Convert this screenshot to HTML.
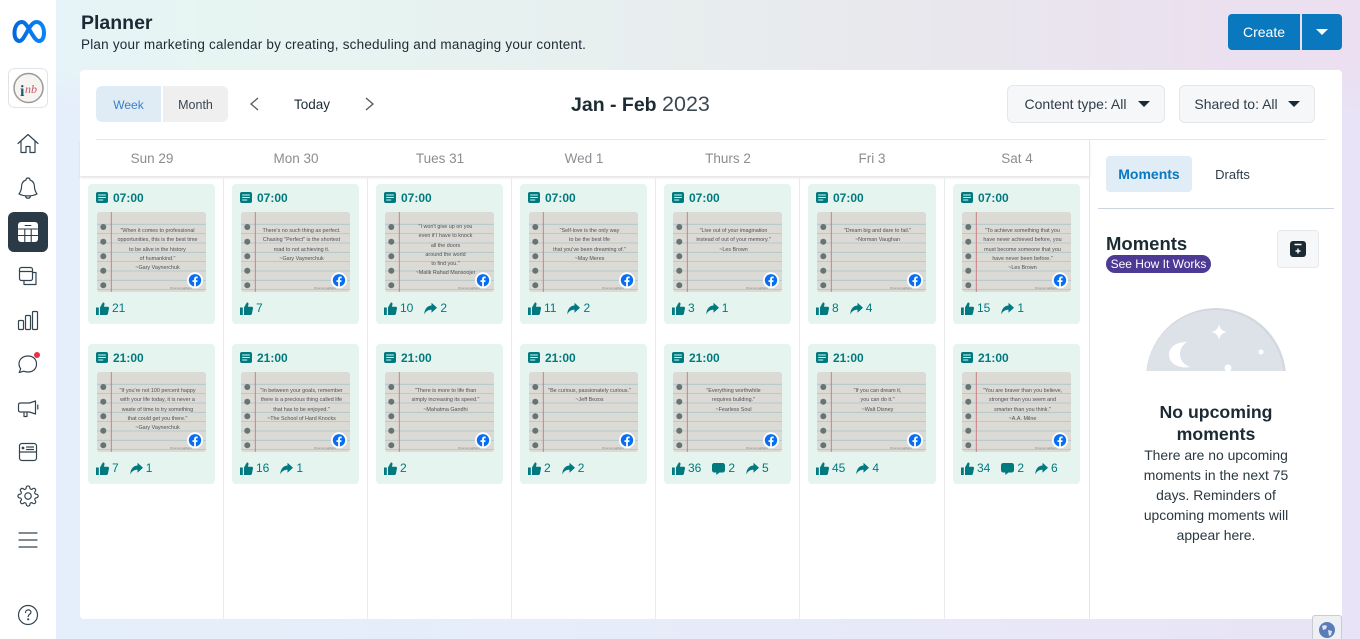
<!DOCTYPE html>
<html lang="en"><head><meta charset="utf-8"><title>Planner</title>
<style>
*{box-sizing:border-box}
html,body{margin:0;padding:0;width:1360px;height:639px;overflow:hidden}
body{position:relative;font-family:"Liberation Sans",sans-serif;color:#1c2b33;
background:linear-gradient(90deg,#e5eefb 0,#e7edfa 40%,#e8e3f6 100%)}
.a{position:absolute}
.band{left:56px;top:0;width:1304px;height:110px;background:linear-gradient(90deg,#e6f3f8 0,#e7f5f2 12%,#e7f2f0 32%,#e8e9ed 62%,#ebe0ef 90%,#ebdff1 100%);-webkit-mask-image:linear-gradient(#000 62%,transparent);mask-image:linear-gradient(#000 62%,transparent)}
.side{left:0;top:0;width:56px;height:639px;background:#fff}
.panel{left:80px;top:70px;width:1262px;height:549px;background:#fff;border-radius:4px}
.sep{top:177px;width:1px;height:442px;background:#e9ebee}
.hd{top:151px;height:16px;line-height:16px;font-size:13.5px;color:#8a8d91;text-align:center;width:120px}
.card{position:absolute;width:127px;height:140px;background:#e6f4ef;border-radius:4px}
.w8{width:128px}
.ti{position:absolute;left:8px;top:8px}
.t{position:absolute;left:25px;top:6px;font-size:12px;line-height:16px;font-weight:700;color:#00797f}
.img{position:absolute;left:9px;top:28px;width:109px;height:80px;border-radius:3px;overflow:hidden}
.img svg{position:absolute;left:0;top:0}
.q{position:absolute;left:14px;width:93px;top:15px;font-size:5.4px;line-height:9.3px;color:#505050;text-align:center;white-space:nowrap}
.st{position:absolute;left:8px;top:116px;height:16px;display:flex;align-items:center;font-size:12px;color:#00797f;white-space:nowrap}
.st svg{margin-right:3px;flex:none}
.st span{margin-right:11px}
.btn{border-radius:6px;background:#f6f7f9;border:1px solid #e4e6ea;font-size:14px;line-height:36px;color:#2f3d47}
.tri{position:absolute;width:0;height:0;border-left:6px solid transparent;border-right:6px solid transparent;border-top:6px solid #1c2b33}
.c{text-align:center;white-space:nowrap}
</style></head><body>
<svg width="0" height="0" style="position:absolute">
<defs>
<linearGradient id="mg" x1="0" x2="1" y1="0" y2="0"><stop offset="0" stop-color="#0668e1"/><stop offset="1" stop-color="#0a85f5"/></linearGradient>
<symbol id="post" viewBox="0 0 12 11"><rect width="12" height="11" rx="2" fill="#00797f"/><path d="M2.2 3h7.6M2.2 5.5h7.6M2.2 8h5" stroke="#e6f4ef" stroke-width="1.1"/></symbol>
<symbol id="th" viewBox="0 0 13 13"><path d="M0 5.5h2.8V13H0zM4 5.5 6.7.6c1.300-.4 2 .5 1.800 1.700L8 4.700h3.700c1 0 1.500.8 1.300 1.700l-1.100 5.400c-.2.800-.7 1.200-1.500 1.200H4z" fill="#00797f"/></symbol>
<symbol id="co" viewBox="0 0 13 13"><path d="M2.500 1h8C12 1 13 2 13 3.500v4.500C13 9.500 12 10.500 10.500 10.500H7.500L4.300 13v-2.500H2.500C1 10.500 0 9.500 0 8V3.500C0 2 1 1 2.500 1z" fill="#00797f"/></symbol>
<symbol id="sh" viewBox="0 0 13 13"><path d="M7.500.8 13 5.800 7.500 10.800V7.800C4.500 7.800 2 8.800.3 12.500.3 7.800 2.500 3.900 7.500 3.500z" fill="#00797f"/></symbol>
<symbol id="paper" viewBox="0 0 109 80">
<rect width="109" height="80" fill="#dbdad5"/>
<g stroke="#adc4ca" stroke-width=".8"><path d="M0 12.300h109M0 21.600h109M0 31h109M0 40.300h109M0 49.600h109M0 59h109M0 68.300h109M0 77.600h109"/></g>
<path d="M14.300 0v80" stroke="#c9767c" stroke-width=".9"/>
<g fill="#687473"><circle cx="6.300" cy="15" r="3"/><circle cx="6.300" cy="29.700" r="3"/><circle cx="6.300" cy="44.300" r="3"/><circle cx="6.300" cy="58.700" r="3"/><circle cx="6.300" cy="73.300" r="3"/></g>
<text x="73" y="77" font-size="3" fill="#8a8a8a" font-family="Liberation Sans">#ConversaMaps</text>
<circle cx="98" cy="68.300" r="8" fill="#fff"/><circle cx="98" cy="68.300" r="6.200" fill="#0a6ef0"/>
<path d="M97.100 74.500v-4.500h-1.600v-1.800h1.600v-1.300c0-1.600.9-2.400 2.300-2.400l1.300.1v1.600h-.9c-.7 0-.9.400-.9 1v1h1.700l-.3 1.800h-1.400v4.500z" fill="#fff"/>
</symbol>
</defs></svg>

<div class="a band"></div>
<div class="a side"></div>
<svg class="a" style="left:0;top:0" width="56" height="639" viewBox="0 0 56 639" fill="none" stroke="#33444f" stroke-width="1.200" stroke-linejoin="round" stroke-linecap="round">
<path d="M14.500 33C14.500 26 18 22 22 22 28 22 33 41 39 41 42.500 41 44 37 44 33 44 26 40.500 22 36.500 22 29 22 25 41 19.500 41 16 41 14.500 37 14.500 33z" stroke="url(#mg)" stroke-width="4"/>
<rect x="8.500" y="68.500" width="39" height="39" rx="6" stroke="#e0e3e8" stroke-width="1" fill="#fff"/>
<circle cx="28.500" cy="88" r="14.500" stroke="#9a9a9a" stroke-width="1.500" fill="#f6f3f1"/>
<text x="20" y="96" font-size="16" font-weight="700" fill="#1f5a70" stroke="none" font-family="Liberation Serif">i</text>
<text x="25" y="93" font-size="12" font-style="italic" fill="#c45a6a" stroke="none" font-family="Liberation Serif">nb</text>
<path d="M18 143.500 28 134.500 38 143.500M21 141v11.500h5v-6h4v6h5V141"/>
<path d="M28 178c-1.500 0-2 1-2 2-3 1-4.500 3.500-4.500 7 0 3-.8 4.500-2.500 7 5 2.500 13 2.500 18 0-1.700-2.500-2.500-4-2.500-7 0-3.500-1.500-6-4.500-7 0-1-.5-2-2-2zM25.500 196c.5 3 4.500 3 5 0"/>
<rect x="8" y="212" width="40" height="40" rx="6" fill="#2a3b47" stroke="none"/>
<rect x="18" y="222" width="20" height="20" rx="3" fill="#fff" stroke="none"/>
<path d="M25 225.500h6" stroke="#2a3b47" stroke-width="1"/>
<path d="M18.500 229h19M18.500 235.500h19M24.800 229v13M31.200 229v13" stroke="#2a3b47" stroke-width="1.100"/>
<rect x="19.500" y="267.500" width="13" height="13" rx="2"/><path d="M19.500 271.500h13M32.500 272.500h3.500v12h-12v-3.500"/>
<rect x="18.500" y="320.500" width="5" height="9" rx="1"/><rect x="25.500" y="315.500" width="5" height="14" rx="1"/><rect x="32.500" y="311.500" width="5" height="18" rx="1"/>
<path d="M28 356c-5.500 0-9 3.500-9 8 0 2 .7 3.500 1.700 4.800l-1.500 3.700 4.500-1.300c1.300.6 2.800.8 4.300.8 5.500 0 8.500-3.500 8.500-8s-3-8-8.500-8z"/>
<circle cx="37" cy="355" r="3" fill="#e8304a" stroke="none"/>
<path d="M18.500 405c0-1.500 1-2 2-2h9l6-2v13l-6-2h-9c-1 0-2-.5-2-2zM37.800 405v4M24 412v4.500h3V412"/>
<rect x="19.500" y="443.500" width="17" height="17" rx="2.500"/><path d="M19.500 452h17M26.500 447h7M26.500 449.500h7"/><circle cx="23" cy="448" r=".8" fill="#33444f"/>
<g transform="translate(17 485) scale(.92)"><path d="M19.400 15a1.650 1.650 0 0 0 .33 1.820l.06.06a2 2 0 0 1 0 2.830 2 2 0 0 1-2.830 0l-.06-.06a1.650 1.650 0 0 0-1.820-.33 1.650 1.650 0 0 0-1 1.510V21a2 2 0 0 1-2 2 2 2 0 0 1-2-2v-.09A1.650 1.650 0 0 0 9 19.400a1.650 1.650 0 0 0-1.820.33l-.06.06a2 2 0 0 1-2.830 0 2 2 0 0 1 0-2.830l.06-.06a1.650 1.650 0 0 0 .33-1.820 1.650 1.650 0 0 0-1.510-1H3a2 2 0 0 1-2-2 2 2 0 0 1 2-2h.09A1.650 1.650 0 0 0 4.600 9a1.650 1.650 0 0 0-.33-1.820l-.06-.06a2 2 0 0 1 0-2.830 2 2 0 0 1 2.830 0l.06.06a1.650 1.650 0 0 0 1.820.33H9a1.650 1.650 0 0 0 1-1.510V3a2 2 0 0 1 2-2 2 2 0 0 1 2 2v.09a1.650 1.650 0 0 0 1 1.510 1.650 1.650 0 0 0 1.820-.33l.06-.06a2 2 0 0 1 2.830 0 2 2 0 0 1 0 2.830l-.06.06a1.650 1.650 0 0 0-.33 1.820V9a1.650 1.650 0 0 0 1.510 1H21a2 2 0 0 1 2 2 2 2 0 0 1-2 2h-.09a1.650 1.650 0 0 0-1.510 1z" stroke-width="1.300"/><circle cx="12" cy="12" r="3.500" stroke-width="1.300"/></g>
<path d="M19 533h18M19 540h18M19 547h18"/>
<circle cx="28" cy="615" r="9.500"/><path d="M25.500 612.500c0-3.500 5.500-3.500 5.500-.2 0 2-2.800 2-2.800 4.200" stroke-width="1.200"/><circle cx="28.200" cy="619.300" r=".5" fill="#33444f"/>
</svg>

<div class="a" style="left:81px;top:11px;font-size:19.500px;line-height:24px;font-weight:700;white-space:nowrap">Planner</div>
<div class="a" style="left:81px;top:36px;font-size:13.500px;line-height:18px;white-space:nowrap;letter-spacing:.21px">Plan your marketing calendar by creating, scheduling and managing your content.</div>
<div class="a c" style="left:1228px;top:14px;width:72px;height:36px;background:#0a78be;border-radius:4px 0 0 4px;color:#fff;font-size:14px;line-height:36px">Create</div>
<div class="a" style="left:1302px;top:14px;width:40px;height:36px;background:#0a78be;border-radius:0 4px 4px 0"></div>
<div class="tri" style="left:1316px;top:29px;border-top-color:#fff"></div>

<div class="a panel"></div>
<div class="a c" style="left:96px;top:86px;width:65px;height:36px;background:#dfebf5;border-radius:6px 0 0 6px;color:#3a80c8;font-size:12px;line-height:38px">Week</div>
<div class="a c" style="left:163px;top:86px;width:65px;height:36px;background:#efefef;border-radius:0 6px 6px 0;color:#3a4650;font-size:12.500px;line-height:38px">Month</div>
<svg class="a" style="left:248px;top:96px" width="128" height="16" fill="none" stroke="#555" stroke-width="1.300"><path d="M10 2 3 8l7 6M118 2l7 6-7 6"/></svg>
<div class="a c" style="left:282px;top:96px;width:60px;font-size:13.500px;line-height:18px">Today</div>
<div class="a" style="left:571px;top:92px;font-size:19.500px;line-height:24px;white-space:nowrap"><b>Jan - Feb</b> <span style="color:#3c4850;margin-left:0;font-size:21.500px">2023</span></div>
<div class="a btn c" style="left:1007px;top:85px;width:158px;height:38px;padding-right:21px">Content type: All</div><div class="tri" style="left:1138px;top:101px"></div>
<div class="a btn c" style="left:1179px;top:85px;width:136px;height:38px;padding-right:22px">Shared to: All</div><div class="tri" style="left:1288px;top:101px"></div>

<div class="a" style="left:96px;top:139px;width:1230px;height:1px;background:#e4e6ea"></div>
<div class="a" style="left:80px;top:140px;width:1010px;height:36px;background:#fff;box-shadow:0 2px 2px rgba(0,0,0,.1)"></div>
<div class="a" style="left:1089px;top:140px;width:1px;height:479px;background:#e4e6ea"></div>
<div class="a sep" style="left:223px"></div><div class="a sep" style="left:367px"></div><div class="a sep" style="left:511px"></div><div class="a sep" style="left:655px"></div><div class="a sep" style="left:799px"></div><div class="a sep" style="left:944px"></div>
<div class="a hd" style="left:92px">Sun 29</div><div class="a hd" style="left:236px">Mon 30</div><div class="a hd" style="left:380px">Tues 31</div><div class="a hd" style="left:524px">Wed 1</div><div class="a hd" style="left:668px">Thurs 2</div><div class="a hd" style="left:812px">Fri 3</div><div class="a hd" style="left:957px">Sat 4</div>

<!-- row 1 -->
<div class="card" style="left:88px;top:184px"><svg class="ti" width="12" height="11"><use href="#post"/></svg><div class="t">07:00</div><div class="img"><svg width="109" height="80"><use href="#paper"/></svg><div class="q">"When it comes to professional<br>opportunities, this is the best time<br>to be alive in the history<br>of humankind."<br>~Gary Vaynerchuk</div></div><div class="st"><svg width="13" height="13"><use href="#th"/></svg><span>21</span></div></div>
<div class="card" style="left:232px;top:184px"><svg class="ti" width="12" height="11"><use href="#post"/></svg><div class="t">07:00</div><div class="img"><svg width="109" height="80"><use href="#paper"/></svg><div class="q">There's no such thing as perfect.<br>Chasing "Perfect" is the shortest<br>road to not achieving it.<br>~Gary Vaynerchuk</div></div><div class="st"><svg width="13" height="13"><use href="#th"/></svg><span>7</span></div></div>
<div class="card" style="left:376px;top:184px"><svg class="ti" width="12" height="11"><use href="#post"/></svg><div class="t">07:00</div><div class="img"><svg width="109" height="80"><use href="#paper"/></svg><div class="q" style="top:11px">"I won't give up on you<br>even if I have to knock<br>all the doors<br>around the world<br>to find you."<br>~Malik Rahad Mansoojer</div></div><div class="st"><svg width="13" height="13"><use href="#th"/></svg><span>10</span><svg width="13" height="13"><use href="#sh"/></svg><span>2</span></div></div>
<div class="card" style="left:520px;top:184px"><svg class="ti" width="12" height="11"><use href="#post"/></svg><div class="t">07:00</div><div class="img"><svg width="109" height="80"><use href="#paper"/></svg><div class="q">"Self-love is the only way<br>to be the best life<br>that you've been dreaming of."<br>~May Meres</div></div><div class="st"><svg width="13" height="13"><use href="#th"/></svg><span>11</span><svg width="13" height="13"><use href="#sh"/></svg><span>2</span></div></div>
<div class="card" style="left:664px;top:184px"><svg class="ti" width="12" height="11"><use href="#post"/></svg><div class="t">07:00</div><div class="img"><svg width="109" height="80"><use href="#paper"/></svg><div class="q">"Live out of your imagination<br>instead of out of your memory."<br>~Les Brown</div></div><div class="st"><svg width="13" height="13"><use href="#th"/></svg><span>3</span><svg width="13" height="13"><use href="#sh"/></svg><span>1</span></div></div>
<div class="card w8" style="left:808px;top:184px"><svg class="ti" width="12" height="11"><use href="#post"/></svg><div class="t">07:00</div><div class="img"><svg width="109" height="80"><use href="#paper"/></svg><div class="q">"Dream big and dare to fail."<br>~Norman Vaughan</div></div><div class="st"><svg width="13" height="13"><use href="#th"/></svg><span>8</span><svg width="13" height="13"><use href="#sh"/></svg><span>4</span></div></div>
<div class="card" style="left:953px;top:184px"><svg class="ti" width="12" height="11"><use href="#post"/></svg><div class="t">07:00</div><div class="img"><svg width="109" height="80"><use href="#paper"/></svg><div class="q">"To achieve something that you<br>have never achieved before, you<br>must become someone that you<br>have never been before."<br>~Les Brown</div></div><div class="st"><svg width="13" height="13"><use href="#th"/></svg><span>15</span><svg width="13" height="13"><use href="#sh"/></svg><span>1</span></div></div>
<!-- row 2 -->
<div class="card" style="left:88px;top:344px"><svg class="ti" width="12" height="11"><use href="#post"/></svg><div class="t">21:00</div><div class="img"><svg width="109" height="80"><use href="#paper"/></svg><div class="q">"If you're not 100 percent happy<br>with your life today, it is never a<br>waste of time to try something<br>that could get you there."<br>~Gary Vaynerchuk</div></div><div class="st"><svg width="13" height="13"><use href="#th"/></svg><span>7</span><svg width="13" height="13"><use href="#sh"/></svg><span>1</span></div></div>
<div class="card" style="left:232px;top:344px"><svg class="ti" width="12" height="11"><use href="#post"/></svg><div class="t">21:00</div><div class="img"><svg width="109" height="80"><use href="#paper"/></svg><div class="q">"In between your goals, remember<br>there is a precious thing called life<br>that has to be enjoyed."<br>~The School of Hard Knocks</div></div><div class="st"><svg width="13" height="13"><use href="#th"/></svg><span>16</span><svg width="13" height="13"><use href="#sh"/></svg><span>1</span></div></div>
<div class="card" style="left:376px;top:344px"><svg class="ti" width="12" height="11"><use href="#post"/></svg><div class="t">21:00</div><div class="img"><svg width="109" height="80"><use href="#paper"/></svg><div class="q">"There is more to life than<br>simply increasing its speed."<br>~Mahatma Gandhi</div></div><div class="st"><svg width="13" height="13"><use href="#th"/></svg><span>2</span></div></div>
<div class="card" style="left:520px;top:344px"><svg class="ti" width="12" height="11"><use href="#post"/></svg><div class="t">21:00</div><div class="img"><svg width="109" height="80"><use href="#paper"/></svg><div class="q">"Be curious, passionately curious."<br>~Jeff Bezos</div></div><div class="st"><svg width="13" height="13"><use href="#th"/></svg><span>2</span><svg width="13" height="13"><use href="#sh"/></svg><span>2</span></div></div>
<div class="card" style="left:664px;top:344px"><svg class="ti" width="12" height="11"><use href="#post"/></svg><div class="t">21:00</div><div class="img"><svg width="109" height="80"><use href="#paper"/></svg><div class="q">"Everything worthwhile<br>requires building."<br>~Fearless Soul</div></div><div class="st"><svg width="13" height="13"><use href="#th"/></svg><span>36</span><svg width="13" height="13"><use href="#co"/></svg><span>2</span><svg width="13" height="13"><use href="#sh"/></svg><span>5</span></div></div>
<div class="card w8" style="left:808px;top:344px"><svg class="ti" width="12" height="11"><use href="#post"/></svg><div class="t">21:00</div><div class="img"><svg width="109" height="80"><use href="#paper"/></svg><div class="q">"If you can dream it,<br>you can do it."<br>~Walt Disney</div></div><div class="st"><svg width="13" height="13"><use href="#th"/></svg><span>45</span><svg width="13" height="13"><use href="#sh"/></svg><span>4</span></div></div>
<div class="card" style="left:953px;top:344px"><svg class="ti" width="12" height="11"><use href="#post"/></svg><div class="t">21:00</div><div class="img"><svg width="109" height="80"><use href="#paper"/></svg><div class="q">"You are braver than you believe,<br>stronger than you seem and<br>smarter than you think."<br>~A.A. Milne</div></div><div class="st"><svg width="13" height="13"><use href="#th"/></svg><span>34</span><svg width="13" height="13"><use href="#co"/></svg><span>2</span><svg width="13" height="13"><use href="#sh"/></svg><span>6</span></div></div>

<!-- moments -->
<div class="a c" style="left:1106px;top:156px;width:86px;height:36px;background:#e0ecf6;border-radius:4px;color:#0a78be;font-size:14px;font-weight:700;line-height:36px">Moments</div>
<div class="a c" style="left:1205px;top:156px;width:55px;font-size:13px;line-height:37px;color:#2f3d47">Drafts</div>
<div class="a" style="left:1098px;top:208px;width:236px;height:1px;background:#cdd4e0"></div>
<div class="a" style="left:1106px;top:233px;font-size:18.500px;line-height:22px;font-weight:700;white-space:nowrap">Moments</div>
<div class="a c" style="left:1106px;top:255px;width:105px;height:18px;background:#4c3a94;border-radius:9px;color:#fff;font-size:12px;line-height:18px">See How It Works</div>
<div class="a" style="left:1277px;top:230px;width:42px;height:38px;background:#f6f7f9;border:1px solid #e6e8ec;border-radius:4px"></div>
<svg class="a" style="left:1290px;top:241px" width="16" height="16"><rect width="16" height="16" rx="3" fill="#1c2b33"/><path d="M4.500 3.500h7M8 7.500v5M5.500 10h5" stroke="#fff" stroke-width="1.400"/></svg>
<svg class="a" style="left:1140px;top:300px" width="152" height="75" viewBox="0 0 152 75"><clipPath id="mc"><rect width="152" height="71"/></clipPath><g clip-path="url(#mc)"><circle cx="76" cy="78" r="70" fill="#d2d8de"/><circle cx="75" cy="79" r="69" fill="#dde2e8"/><path d="M79 24Q80 31 87 32 80 33 79 40 78 33 71 32 78 31 79 24z" fill="#fff"/><path d="M47 42C36 42 29 47 29 55c0 8 9 14 21 12-6-2-10-7-10-13 0-5 3-10 7-12z" fill="#fff"/><circle cx="121" cy="52" r="2.500" fill="#fff"/><circle cx="88" cy="68" r="3.500" fill="#fff"/></g></svg>
<div class="a c" style="left:1106px;top:401px;width:220px;font-size:17.700px;line-height:22px;font-weight:700">No upcoming<br>moments</div>
<div class="a c" style="left:1106px;top:445px;width:220px;font-size:13.900px;line-height:20px;color:#2a3840">There are no upcoming<br>moments in the next 75<br>days. Reminders of<br>upcoming moments will<br>appear here.</div>

<div class="a" style="left:1312px;top:615px;width:30px;height:26px;background:#eef0f3;border:1px solid #c8ccd2;border-radius:3px 3px 0 0"></div>
<svg class="a" style="left:1319px;top:622px" width="16" height="16"><circle cx="8" cy="8" r="8" fill="#5a7cb8"/><path d="M3 4c2-1 4-1 5 0l-1 3-3 1zM9 8l4 1-1 4-2 1z" fill="#dfe6f2"/></svg>
</body></html>
